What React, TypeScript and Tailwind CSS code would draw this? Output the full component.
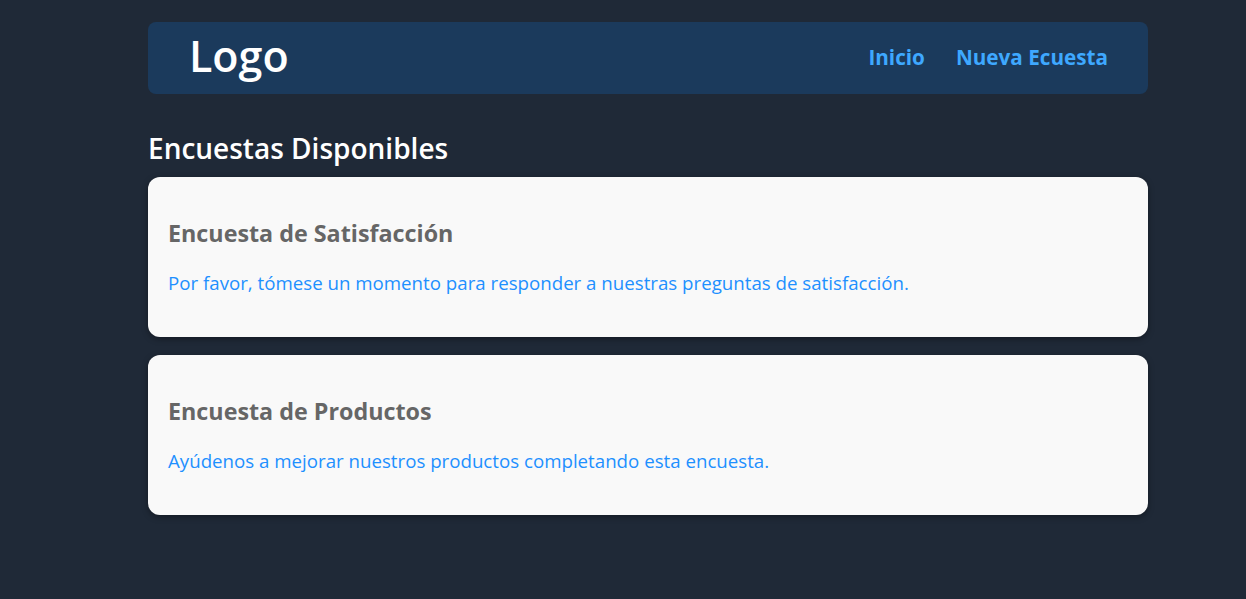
import React from 'react';

const surveys = [
  {
    id: 1,
    title: 'Encuesta de Satisfacción',
    description: 'Por favor, tómese un momento para responder a nuestras preguntas de satisfacción.',
  },
  {
    id: 2,
    title: 'Encuesta de Productos',
    description: 'Ayúdenos a mejorar nuestros productos completando esta encuesta.',
  },
];

export default function App() {
  return (
    <div className="min-h-screen bg-[#1f2937] font-['Open_Sans',sans-serif] pt-[22px] pb-10">
      <div className="ml-[148px] w-[1000px]">
        <header className="h-[72px] bg-[#1b3a5c] rounded-lg flex items-center justify-between pl-[41px] pr-[40px]">
          <div className="text-[43px] leading-none text-white font-semibold -mt-1.5">Logo</div>
          <nav className="flex items-center gap-[31px] text-[20.7px] font-bold text-[#3ea8ff]">
            <a href="#">Inicio</a>
            <a href="#">Nueva Ecuesta</a>
          </nav>
        </header>

        <h2 className="mt-[36px] text-[28px] leading-[36px] font-semibold text-white">Encuestas Disponibles</h2>

        <div className="mt-[11px] flex flex-col gap-[18px]">
          {surveys.map((s) => (
            <div
              key={s.id}
              className="h-[160px] bg-[#f9f9f9] rounded-xl shadow-[0_2px_6px_rgba(0,0,0,0.35)] px-5 pt-[41px]"
            >
              <h3 className="text-[23.3px] leading-[30px] font-bold text-[#666666]">{s.title}</h3>
              <p className="mt-[23px] text-[18.7px] leading-6 text-[#1e90ff]">{s.description}</p>
            </div>
          ))}
        </div>
      </div>
    </div>
  );
}
